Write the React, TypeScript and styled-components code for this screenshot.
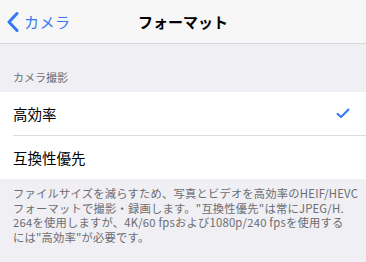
import styled, { createGlobalStyle } from 'styled-components'

const GlobalStyle = createGlobalStyle`
  html, body {
    margin: 0;
    padding: 0;
    background: #efeff4;
  }
  body {
    font-family: 'Noto Sans CJK JP', 'Noto Sans', sans-serif;
    -webkit-font-smoothing: antialiased;
  }
`

const Screen = styled.div`
  width: 366px;
  height: 262px;
  overflow: hidden;
  background: #efeff4;
`

const NavBar = styled.header`
  height: 43px;
  background: #f7f7f7;
  border-bottom: 1px solid #d9d9dd;
  display: grid;
  grid-template-columns: 1fr auto 1fr;
  align-items: center;
`

const BackButton = styled.div`
  display: flex;
  align-items: center;
  gap: 5px;
  padding-left: 7px;
  color: #3478f6;
  font-size: 15px;
  letter-spacing: 0.5px;
`

const Title = styled.h1`
  margin: 0;
  font-size: 15px;
  font-weight: 700;
  color: #000;
`

const SectionHeader = styled.div`
  padding: 26px 13px 8px;
  font-size: 11px;
  color: #6d6d72;
  line-height: 14px;
`

const Group = styled.div`
  background: #fff;
`

const Row = styled.div<{ last?: boolean }>`
  height: 43px;
  margin-left: 13px;
  padding-right: 16px;
  display: flex;
  align-items: center;
  justify-content: space-between;
  font-size: 14.5px;
  color: #000;
  border-bottom: ${({ last }) => (last ? 'none' : '1px solid #dcdce0')};
`

const Footer = styled.p`
  margin: 0;
  padding: 7px 13px 0;
  font-size: 11.3px;
  line-height: 14.7px;
  letter-spacing: 0.2px;
  color: #6d6d72;
  white-space: nowrap;
`

const Chevron = () => (
  <svg width='12' height='20' viewBox='0 0 12 20'>
    <path d='M10 1.5 L2 10 L10 18.5' fill='none' stroke='#3478f6' strokeWidth='3' strokeLinecap='round' strokeLinejoin='round' />
  </svg>
)

const Check = () => (
  <svg width='14' height='11' viewBox='0 0 14 11'>
    <path d='M1.5 5.8 L5 9 L12.5 1.5' fill='none' stroke='#3478f6' strokeWidth='2' strokeLinecap='round' strokeLinejoin='round' />
  </svg>
)

export default function App() {
  return (
    <Screen>
      <GlobalStyle />
      <NavBar>
        <BackButton>
          <Chevron />
          カメラ
        </BackButton>
        <Title>フォーマット</Title>
        <div />
      </NavBar>
      <SectionHeader>カメラ撮影</SectionHeader>
      <Group>
        <Row>
          高効率
          <Check />
        </Row>
        <Row last>互換性優先</Row>
      </Group>
      <Footer>
        ファイルサイズを減らすため、写真とビデオを高効率のHEIF/HEVC
        <br />
        フォーマットで撮影・録画します。"互換性優先"は常にJPEG/H.
        <br />
        264を使用しますが、4K/60 fpsおよび1080p/240 fpsを使用する
        <br />
        には"高効率"が必要です。
      </Footer>
    </Screen>
  )
}
